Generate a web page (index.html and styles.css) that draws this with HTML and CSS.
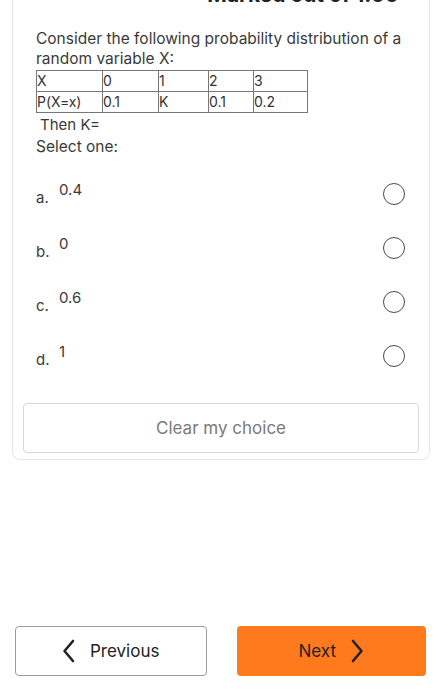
FILE: index.html
```html
<!DOCTYPE html>
<html>
<head>
<meta charset="utf-8">
<link rel="stylesheet" href="styles.css">
</head>
<body>
<div class="card">
  <div class="marked">Marked out of 1.00</div>
  <div class="qtext">
    <p class="intro">Consider the following probability distribution of a random variable X:</p>
    <table class="dist">
      <tr><td class="c1">X</td><td class="c2">0</td><td class="c3">1</td><td class="c4">2</td><td class="c5">3</td></tr>
      <tr><td>P(X=x)</td><td>0.1</td><td>K</td><td>0.1</td><td>0.2</td></tr>
    </table>
    <p class="then">Then K=</p>
    <p class="select">Select one:</p>
  </div>
  <div class="options">
    <div class="opt"><span class="letter">a.</span><span class="val">0.4</span><span class="radio"></span></div>
    <div class="opt"><span class="letter">b.</span><span class="val">0</span><span class="radio"></span></div>
    <div class="opt"><span class="letter">c.</span><span class="val">0.6</span><span class="radio"></span></div>
    <div class="opt"><span class="letter">d.</span><span class="val">1</span><span class="radio"></span></div>
  </div>
  <div class="clear">Clear my choice</div>
</div>
<div class="nav">
  <div class="btn prev">
    <svg width="14" height="24" viewBox="0 0 14 24"><path d="M11 2 L2.5 12 L11 22" fill="none" stroke="#222" stroke-width="2.6" stroke-linecap="round" stroke-linejoin="round"/></svg>
    <span>Previous</span>
  </div>
  <div class="btn next">
    <span>Next</span>
    <svg width="14" height="24" viewBox="0 0 14 24"><path d="M3 2 L11.5 12 L3 22" fill="none" stroke="#222" stroke-width="2.6" stroke-linecap="round" stroke-linejoin="round"/></svg>
  </div>
</div>
</body>
</html>
```
FILE: styles.css
```css
html, body {
  margin: 0;
  padding: 0;
  background: #fff;
}
body {
  font-family: Inter, "Liberation Sans", sans-serif;
  color: #3a3a3a;
  width: 442px;
  height: 700px;
  overflow: hidden;
}
.card {
  margin: -13px 12px 0 12px;
  border: 1px solid #e6e6e6;
  border-top: none;
  border-radius: 0 0 8px 8px;
  padding: 0 10px 6px 10px;
}
.marked {
  font-size: 21px;
  font-weight: 700;
  color: #222;
  text-align: right;
  padding-right: 20px;
  line-height: 16px;
  height: 16px;
  overflow: visible;
}
.qtext {
  padding: 26px 0 0 13px;
}
.intro {
  margin: 0;
  font-size: 15.5px;
  line-height: 20px;
  width: 370px;
}
.dist {
  border-collapse: collapse;
  font-size: 14px;
  margin-top: 1px;
  color: #333;
}
.dist td {
  border: 1.5px solid #777;
  padding: 0;
  height: 20px;
  line-height: 20px;
  vertical-align: middle;
}
.c1 { width: 65px; }
.c2 { width: 55px; }
.c3 { width: 49px; }
.c4 { width: 44px; }
.c5 { width: 53px; }
.then {
  margin: 2px 0 0 4px;
  font-size: 15px;
  line-height: 19px;
}
.select {
  margin: 3px 0 0 0;
  font-size: 15.5px;
  line-height: 19px;
}
.options {
  padding: 27px 13px 0 13px;
  display: flex;
  flex-direction: column;
  gap: 32px;
}
.opt {
  display: flex;
  align-items: flex-start;
  height: 22px;
  font-size: 15px;
}
.letter {
  width: 23px;
  padding-top: 6px;
  line-height: 18px;
}
.val {
  flex: 1;
  line-height: 18px;
  margin-top: -2px;
}
.radio {
  width: 20px;
  height: 20px;
  border: 1.5px solid #4a4a4a;
  border-radius: 50%;
  margin-right: 1px;
}
.clear {
  margin-top: 36px;
  height: 48px;
  border: 1px solid #d8d8d8;
  border-radius: 4px;
  display: flex;
  align-items: center;
  justify-content: center;
  font-size: 17px;
  color: #7a7a7a;
}
.nav {
  display: flex;
  gap: 30px;
  padding: 166px 16px 0 15px;
}
.btn {
  flex: 1;
  height: 50px;
  border-radius: 4px;
  display: flex;
  align-items: center;
  justify-content: center;
  gap: 14px;
  font-size: 17px;
  color: #222;
  box-sizing: border-box;
}
.prev {
  border: 1px solid #9c9c9c;
}
.next {
  background: #ff7a1c;
}
```
